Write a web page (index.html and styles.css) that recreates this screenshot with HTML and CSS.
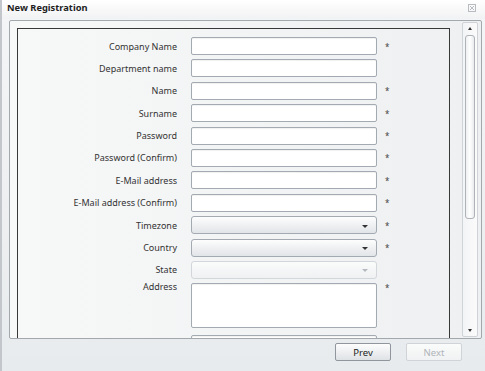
FILE: index.html
```html
<!DOCTYPE html>
<html lang="en">
<head>
  <meta charset="UTF-8" />
  <title>New Registration</title>
  <link rel="stylesheet" href="styles.css">
</head>
<body>
  <div class="window">
    <div class="titlebar">
      <span class="title">New Registration</span>
      <span class="close">
        <svg width="8" height="8" viewBox="0 0 8 8"><rect x="0.5" y="0.5" width="7" height="7" fill="none" stroke="#b8bcc0"/><path d="M2 2 L6 6 M6 2 L2 6" stroke="#b8bcc0" stroke-width="1"/></svg>
      </span>
    </div>

    <div class="viewer">
      <div class="viewport">
        <div class="form">
          <label>Company Name</label><input class="field" type="text"><span class="req">*</span>
          <label>Department name</label><input class="field" type="text"><span class="req"></span>
          <label>Name</label><input class="field" type="text"><span class="req">*</span>
          <label>Surname</label><input class="field" type="text"><span class="req">*</span>
          <label>Password</label><input class="field" type="password"><span class="req">*</span>
          <label>Password (Confirm)</label><input class="field" type="password"><span class="req">*</span>
          <label>E-Mail address</label><input class="field" type="text"><span class="req">*</span>
          <label>E-Mail address (Confirm)</label><input class="field" type="text"><span class="req">*</span>
          <label>Timezone</label><div class="combo"><span class="arrow"></span></div><span class="req">*</span>
          <label>Country</label><div class="combo"><span class="arrow"></span></div><span class="req">*</span>
          <label>State</label><div class="combo disabled"><span class="arrow"></span></div><span class="req"></span>
          <label class="top">Address</label><textarea class="field area"></textarea><span class="req top">*</span>
          <label></label><input class="field" type="text"><span class="req"></span>
        </div>
      </div>
      <div class="scrollbar">
        <span class="sb-up"></span>
        <div class="sb-track"><div class="sb-thumb"></div></div>
        <span class="sb-down"></span>
      </div>
    </div>

    <div class="buttons">
      <button class="btn">Prev</button>
      <button class="btn" disabled>Next</button>
    </div>
  </div>
</body>
</html>
```

FILE: styles.css
```css
body {
  margin: 0;
  font-family: "Noto Sans", "DejaVu Sans", sans-serif;
  font-size: 9px;
  color: #333;
  background: #e9ecee;
}

.window {
  width: 485px;
  height: 371px;
  box-sizing: border-box;
  border-left: 2px solid #c3c7cb;
  background: linear-gradient(#f4f5f6, #e8ebed);
  overflow: hidden;
}

.titlebar {
  height: 19px;
  display: flex;
  align-items: flex-start;
  justify-content: space-between;
  padding: 1px 9px 0 5px;
  box-sizing: border-box;
  background: linear-gradient(#ffffff, #f1f2f3);
}

.title {
  font-weight: bold;
  font-size: 9.3px;
  color: #1e1e1e;
}

.close {
  margin-top: 3px;
  display: flex;
}

.viewer {
  margin: 1px 0 0 7px;
  width: 473px;
  height: 319px;
  box-sizing: border-box;
  border: 1px solid #a3a8ad;
  border-radius: 2px;
  display: flex;
  background: linear-gradient(90deg, #f7f8f8, #eef0f1);
}

.viewport {
  flex: 1;
  overflow: hidden;
  padding: 7px 0 0 7px;
}

.form {
  width: 433px;
  box-sizing: border-box;
  border: 1px solid #383838;
  border-bottom: none;
  padding: 8px 0 0 0;
  display: grid;
  grid-template-columns: 159px 186px 20px;
  column-gap: 14px;
  row-gap: 4.4px;
  align-items: center;
  height: 400px;
  align-content: start;
}

.form label {
  text-align: right;
  white-space: nowrap;
}

.form .top {
  align-self: start;
  margin-top: -3px;
}

.req {
  font-size: 8px;
  color: #444;
  margin-left: -6px;
}

.req.top {
  margin-top: -1px;
}

.field {
  height: 18px;
  box-sizing: border-box;
  border: 1px solid #a3aab2;
  border-radius: 2px;
  background: #fff;
  box-shadow: inset 0 1px 1px rgba(0, 0, 0, 0.06);
  margin: 0;
  padding: 0;
}

.area {
  height: 45px;
  resize: none;
  margin-bottom: 2px;
}

.combo {
  height: 18px;
  box-sizing: border-box;
  border: 1px solid #a3aab2;
  border-radius: 3px;
  background: linear-gradient(#fdfdfd, #eceef0 60%, #e2e5e8);
  display: flex;
  align-items: center;
  justify-content: flex-end;
  padding-right: 8px;
}

.arrow {
  width: 0;
  height: 0;
  border-left: 3px solid transparent;
  border-right: 3px solid transparent;
  border-top: 3px solid #333;
  margin-top: 2px;
}

.combo.disabled {
  border-color: #d3d7db;
  background: linear-gradient(#fafbfb, #eff1f2);
}

.combo.disabled .arrow {
  border-top-color: #b5b9bd;
}

.scrollbar {
  width: 14px;
  margin: 1px 3px 1px 0;
  border: 1px solid #cfd3d7;
  border-radius: 2px;
  background: linear-gradient(90deg, #f3f4f5, #fbfbfc);
  display: flex;
  flex-direction: column;
  align-items: center;
}

.sb-up, .sb-down {
  width: 0;
  height: 0;
  border-left: 2.5px solid transparent;
  border-right: 2.5px solid transparent;
  margin: 4px 0;
}

.sb-up {
  border-bottom: 3px solid #333;
}

.sb-down {
  border-top: 3px solid #333;
}

.sb-track {
  flex: 1;
  width: 100%;
  padding: 1px 2px 0 2px;
  box-sizing: border-box;
}

.sb-thumb {
  height: 182px;
  border: 1px solid #aeb3b8;
  border-radius: 3px;
  background: linear-gradient(90deg, #eef0f2, #ffffff 50%, #e8eaec);
}

.buttons {
  display: flex;
  justify-content: flex-end;
  gap: 15px;
  padding: 4px 23px 0 0;
}

.btn {
  width: 56px;
  height: 18px;
  font-family: "Noto Sans", "DejaVu Sans", sans-serif;
  font-size: 9.5px;
  color: #222;
  border: 1px solid #8f969d;
  border-radius: 2px;
  background: linear-gradient(#fdfdfd, #eceef0 55%, #dfe2e5);
  padding: 0;
}

.btn:disabled {
  color: #b0b4b8;
  border-color: #d0d4d8;
  background: linear-gradient(#fafbfb, #f0f2f3);
}
```
